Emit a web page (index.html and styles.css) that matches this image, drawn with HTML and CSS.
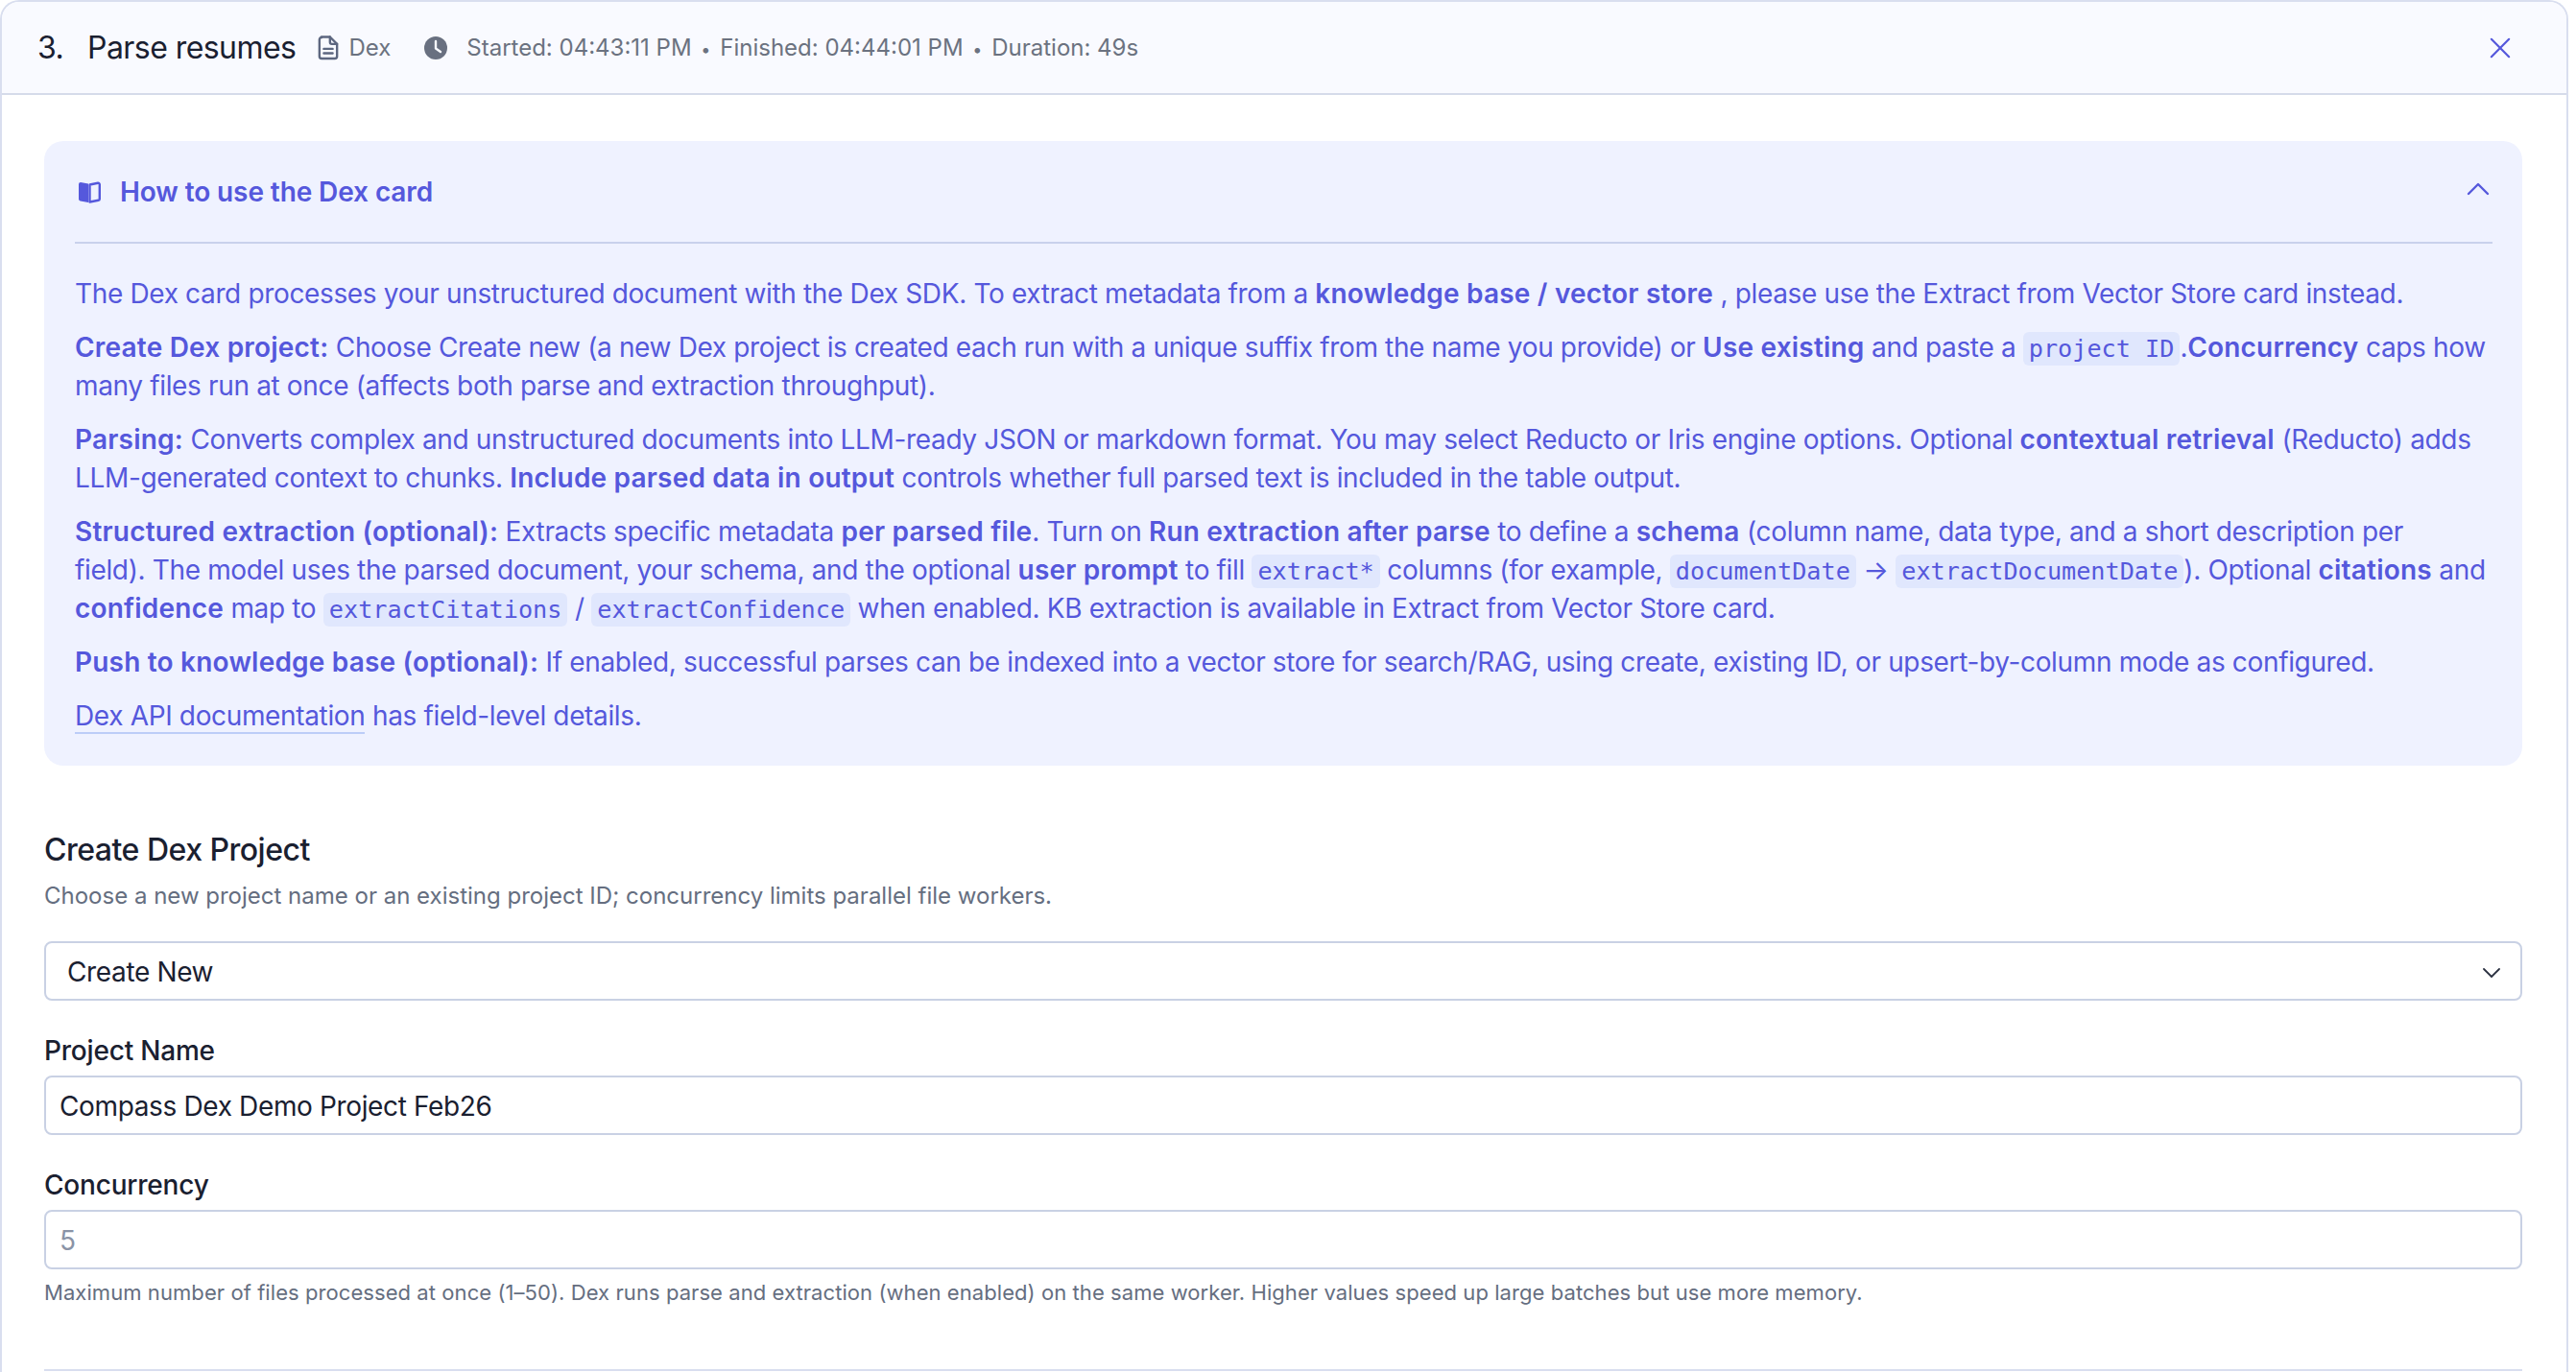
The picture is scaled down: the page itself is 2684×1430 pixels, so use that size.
FILE: index.html
```html
<!DOCTYPE html>
<html lang="en">
<head>
  <meta charset="UTF-8" />
  <title>Parse resumes</title>
  <link rel="stylesheet" href="styles.css">
</head>
<body>
  <div class="panel">

    <!-- Step header -->
    <div class="panel-header">
      <span class="step-number">3.</span>
      <span class="step-title">Parse resumes</span>
      <span class="step-type">
        <svg class="icon-doc" viewBox="0 0 24 28" fill="none" stroke="currentColor" stroke-width="2.6" stroke-linejoin="round" stroke-linecap="round">
          <path d="M4 2h10l8 8v14a2.5 2.5 0 0 1-2.5 2.500h-15a2.500 2.500 0 0 1-2.500-2.500v-19a2.500 2.500 0 0 1 2.500-2.500z"/>
          <path d="M14 2v6a2 2 0 0 0 2 2h6"/>
          <path d="M7 15.500h10M7 20.500h10"/>
        </svg>
        Dex
      </span>
      <svg class="icon-clock" viewBox="0 0 24 24">
        <circle cx="12" cy="12" r="12" fill="currentColor"/>
        <path d="M12 5v7.500l5 3.500" fill="none" stroke="#f9faff" stroke-width="2.400" stroke-linecap="round" stroke-linejoin="round"/>
      </svg>
      <span class="step-times">Started: 04:43:11 PM <i>•</i> Finished: 04:44:01 PM <i>•</i> Duration: 49s</span>
      <svg class="icon-close" viewBox="0 0 24 24" fill="none" stroke="currentColor" stroke-width="2.400" stroke-linecap="round">
        <path d="M2 2l20 20M22 2L2 22"/>
      </svg>
    </div>

    <div class="panel-body">

      <!-- Help card -->
      <div class="help-card">
        <div class="help-header">
          <svg class="icon-book" viewBox="0 0 24 24">
            <path d="M11 3.500 3 2a2 2 0 0 0-2 2v15.500a2 2 0 0 0 1.700 2l8.300 1.500z" fill="currentColor"/>
            <path d="M12.500 4.500 21 2.800a1.500 1.500 0 0 1 1.800 1.500v15a1.500 1.500 0 0 1-1.300 1.500l-9 1.700z" fill="none" stroke="currentColor" stroke-width="2.400" stroke-linejoin="round"/>
          </svg>
          <span class="help-title">How to use the Dex card</span>
          <svg class="icon-chevron" viewBox="0 0 24 14" fill="none" stroke="currentColor" stroke-width="2.400" stroke-linecap="round" stroke-linejoin="round">
            <path d="M2 12L12 2l10 10"/>
          </svg>
        </div>
        <div class="help-text">
          <p>The Dex card processes your unstructured document with the Dex SDK. To extract metadata from a <b>knowledge base / vector store</b> , please use the Extract from Vector Store card instead.</p>
          <p><b>Create Dex project:</b> Choose Create new (a new Dex project is created each run with a unique suffix from the name you provide) or <b>Use existing</b> and paste a <code>project ID</code>.<b>Concurrency</b> caps how many files run at once (affects both parse and extraction throughput).</p>
          <p><b>Parsing:</b> Converts complex and unstructured documents into LLM-ready JSON or markdown format. You may select Reducto or Iris engine options. Optional <b>contextual retrieval</b> (Reducto) adds LLM-generated context to chunks. <b>Include parsed data in output</b> controls whether full parsed text is included in the table output.</p>
          <p><b>Structured extraction (optional):</b> Extracts specific metadata <b>per parsed file</b>. Turn on <b>Run extraction after parse</b> to define a <b>schema</b> (column name, data type, and a short description per<br>field). The model uses the parsed document, your schema, and the optional <b>user prompt</b> to fill <code>extract*</code> columns (for example, <code>documentDate</code> → <code>extractDocumentDate</code>). Optional <b>citations</b> and <b>confidence</b> map to <code>extractCitations</code> / <code>extractConfidence</code> when enabled. KB extraction is available in Extract from Vector Store card.</p>
          <p><b>Push to knowledge base (optional):</b> If enabled, successful parses can be indexed into a vector store for search/RAG, using create, existing ID, or upsert-by-column mode as configured.</p>
          <p><a href="#">Dex API documentation</a> has field-level details.</p>
        </div>
      </div>

      <!-- Project settings -->
      <h3 class="section-title">Create Dex Project</h3>
      <p class="section-sub">Choose a new project name or an existing project ID; concurrency limits parallel file workers.</p>

      <div class="select-wrap">
        <select class="field field-select">
          <option>Create New</option>
        </select>
        <svg class="icon-select" viewBox="0 0 18 10" fill="none" stroke="currentColor" stroke-width="1.800" stroke-linecap="round" stroke-linejoin="round">
          <path d="M1 1l8 8 8-8"/>
        </svg>
      </div>

      <label class="field-label">Project Name</label>
      <input class="field" type="text" value="Compass Dex Demo Project Feb26">

      <label class="field-label">Concurrency</label>
      <input class="field" type="text" placeholder="5">
      <p class="field-help">Maximum number of files processed at once (1–50). Dex runs parse and extraction (when enabled) on the same worker. Higher values speed up large batches but use more memory.</p>

      <div class="section-rule"></div>
    </div>
  </div>
</body>
</html>
```

FILE: styles.css
```css
html, body {
  height: 100%;
  margin: 0;
  overflow: hidden;
  background: #fff;
}

body {
  font-family: Inter, 'Noto Sans', sans-serif;
  color: #1a2030;
}

.panel {
  width: 2676px;
  min-height: 1500px;
  box-sizing: border-box;
  border: 2px solid #d9deef;
  border-bottom: none;
  border-radius: 20px 20px 0 0;
}

/* Header */
.panel-header {
  display: flex;
  align-items: center;
  height: 97px;
  box-sizing: border-box;
  padding: 0 58px 0 37px;
  background: #f9faff;
  border-bottom: 2px solid #d5dbea;
  border-radius: 18px 18px 0 0;
}

.step-number {
  width: 52px;
  font-size: 32px;
  letter-spacing: -0.55px;
  color: #1a2030;
}

.step-title {
  font-size: 32px;
  letter-spacing: -0.55px;
  color: #1a2030;
}

.step-type {
  display: flex;
  align-items: center;
  gap: 10px;
  margin-left: 23px;
  font-size: 24px;
  color: #6b7280;
}

.icon-doc {
  width: 22px;
  height: 27px;
  color: #5d6780;
}

.icon-clock {
  width: 24px;
  height: 24px;
  margin-left: 35px;
  color: #697080;
}

.step-times {
  margin-left: 20px;
  font-size: 24px;
  color: #6b7280;
}

.step-times i {
  font-style: normal;
  font-size: 18px;
  margin: 0 3px;
}

.icon-close {
  width: 22px;
  height: 22px;
  margin-left: auto;
  color: #5558dc;
}

.panel-body {
  padding: 48px 46px 0 44px;
}

/* Help card */
.help-card {
  background: #eff2ff;
  border-radius: 20px;
  padding: 0 31px 32px 32px;
}

.help-header {
  display: flex;
  align-items: center;
  height: 105px;
  border-bottom: 2px solid #c9d1ec;
  color: #5558dc;
}

.icon-book {
  width: 24px;
  height: 24px;
  margin-left: 3px;
}

.help-title {
  margin-left: 20px;
  font-size: 28px;
  font-weight: 600;
  letter-spacing: -0.1px;
}

.icon-chevron {
  width: 24px;
  height: 14px;
  margin: 0 3px 6px auto;
}

.help-text {
  padding-top: 32px;
  font-size: 28px;
  line-height: 40px;
  letter-spacing: -0.35px;
  color: #5558dc;
}

.help-text p {
  margin: 0 0 16px;
}

.help-text p:last-child {
  margin-bottom: 0;
}

.help-text b {
  font-weight: 600;
  letter-spacing: 0.2px;
}

.help-text a {
  color: inherit;
  text-decoration: none;
  border-bottom: 2px solid #bccdf8;
}

.help-text code {
  font-family: 'DejaVu Sans Mono', monospace;
  font-size: 25.2px;
  line-height: 20px;
  letter-spacing: 0;
  padding: 3px 6px;
  border-radius: 6px;
  background: #e0e7fd;
}

/* Form */
.section-title {
  margin: 66px 0 0;
  font-size: 32px;
  line-height: 44px;
  font-weight: 500;
  letter-spacing: -0.5px;
  color: #1a2030;
}

.section-sub {
  margin: 10px 0 0;
  font-size: 24px;
  line-height: 32px;
  color: #656e80;
}

.select-wrap {
  position: relative;
  margin-top: 31px;
}

.field {
  display: block;
  width: 100%;
  height: 62px;
  box-sizing: border-box;
  padding: 2px 14px 0;
  border: 2px solid #c9d1e4;
  border-radius: 8px;
  background: #fff;
  font-family: inherit;
  font-size: 28px;
  letter-spacing: -0.36px;
  color: #1a2030;
  outline: none;
}

.field::placeholder {
  color: #8a93a6;
}

.field-select {
  appearance: none;
  padding-left: 22px;
}

.icon-select {
  position: absolute;
  top: 28px;
  right: 23px;
  width: 18px;
  height: 10px;
  color: #2a3040;
}

.field-label {
  display: block;
  margin: 32px 0 6px;
  font-size: 28px;
  line-height: 40px;
  font-weight: 500;
  letter-spacing: -0.2px;
  color: #1a2030;
}

.field-help {
  margin: 8px 0 0;
  font-size: 22px;
  line-height: 32px;
  letter-spacing: 0.07px;
  color: #656e80;
}

.section-rule {
  margin-top: 64px;
  border-top: 2px solid #d9deef;
}
```
